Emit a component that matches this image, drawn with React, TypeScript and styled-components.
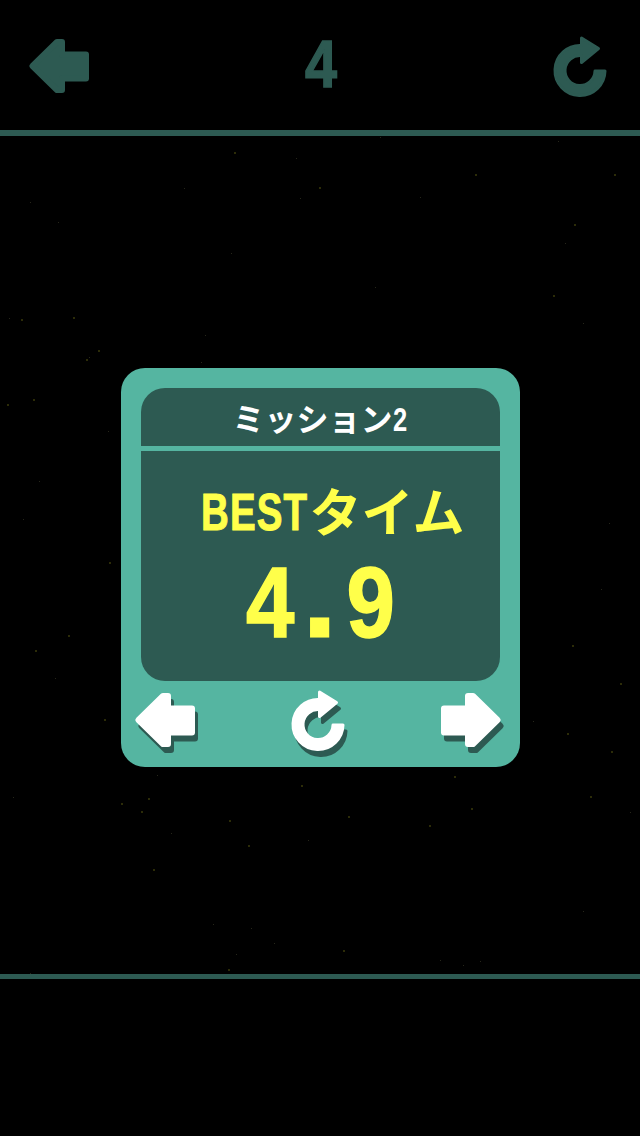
import styled, { createGlobalStyle } from 'styled-components';

const GREEN = '#55b5a1';
const DARK = '#2d5a52';
const YELLOW = '#ffff4a';
const FONT = `"Liberation Sans", "Noto Sans CJK JP", sans-serif`;
const KANA_FONT = `"Noto Sans CJK JP", sans-serif`;

// x, y, size
const STARS: [number, number, number][] = [
	[234, 152, 2], [296, 158, 1], [475, 174, 2], [614, 174, 2], [184, 188, 1], [319, 187, 2], [300, 198, 1],
	[420, 197, 1], [30, 202, 1], [58, 222, 1], [574, 224, 2], [565, 243, 1], [231, 253, 1], [375, 287, 1],
	[553, 295, 2], [583, 323, 1], [9, 318, 1], [21, 319, 2], [73, 317, 2], [205, 335, 1], [98, 350, 2],
	[86, 359, 2], [89, 357, 1], [201, 362, 1], [558, 141, 1], [380, 137, 1],
	[33, 399, 2], [7, 404, 2], [108, 431, 1], [39, 481, 1], [23, 519, 1], [109, 562, 2], [68, 635, 2],
	[35, 650, 2], [609, 523, 1], [601, 589, 1], [572, 645, 2], [55, 678, 1], [104, 719, 2], [620, 683, 2],
	[533, 721, 1], [567, 733, 2], [611, 751, 2],
	[157, 775, 1], [454, 776, 2], [301, 785, 2], [590, 796, 2], [13, 797, 1], [148, 798, 2], [121, 803, 2],
	[141, 811, 2], [471, 808, 2], [348, 816, 2], [229, 820, 2], [429, 825, 2], [630, 812, 1], [171, 833, 1],
	[308, 840, 1], [248, 845, 2], [153, 869, 2], [583, 911, 1], [213, 924, 1], [251, 928, 1], [274, 943, 1],
	[343, 950, 2], [236, 954, 1], [440, 960, 1], [463, 965, 1], [480, 961, 1], [228, 969, 2], [30, 973, 1],
];

const GlobalStyle = createGlobalStyle`
	html, body {
		margin: 0;
		background: #000;
	}
`;

const Screen = styled.div`
	position: relative;
	width: 640px;
	height: 1136px;
	overflow: hidden;
	background: #000;
	display: flex;
	flex-direction: column;
	font-family: ${FONT};
`;

const StarField = styled.svg`
	position: absolute;
	inset: 0;
`;

const Header = styled.header`
	position: relative;
	height: 94px;
	flex: none;
	display: flex;
	align-items: flex-start;
	justify-content: space-between;
	padding: 36px 33px 0 29px;
	border-bottom: 6px solid ${DARK};
`;

const BackIcon = styled.svg`
	margin-top: 3px;
	display: block;
`;

const Count = styled.div`
	width: 32px;
	margin-top: -2px;
	display: flex;
	justify-content: center;
	color: ${DARK};
	font-size: 66px;
	font-weight: 700;
	line-height: 60px;
	-webkit-text-stroke: 1.5px ${DARK};
	transform: scaleX(0.87);
`;

const Main = styled.main`
	position: relative;
	flex: none;
	height: 606px;
	padding-top: 232px;
	display: flex;
	justify-content: center;
	align-items: flex-start;
	border-bottom: 5px solid ${DARK};
`;

const Card = styled.section`
	width: 399px;
	height: 399px;
	box-sizing: border-box;
	background: ${GREEN};
	border-radius: 24px;
	padding-top: 20px;
	display: flex;
	flex-direction: column;
	align-items: center;
`;

const Panel = styled.div`
	width: 359px;
	height: 293px;
	flex: none;
	background: ${DARK};
	border-radius: 24px;
	overflow: hidden;
	display: flex;
	flex-direction: column;
`;

const Title = styled.div`
	height: 58px;
	flex: none;
	display: flex;
	align-items: center;
	justify-content: center;
	color: #fff;
	font-size: 32px;
	font-weight: 700;
	line-height: 1;
	border-bottom: 5px solid ${GREEN};
`;

const TitleKana = styled.span`
	font-family: ${KANA_FONT};
`;

const TitleNumber = styled.span`
	display: inline-block;
	width: 15px;
	font-size: 34px;
	transform: translateY(2px) scaleX(0.75);
	transform-origin: left center;
`;

const Body = styled.div`
	flex: 1;
	display: flex;
	flex-direction: column;
	align-items: flex-start;
`;

const BestRow = styled.div`
	margin: 34px 0 0 60px;
	height: 50px;
	display: flex;
	align-items: center;
	color: ${YELLOW};
	line-height: 1;
	font-weight: 700;
`;

const BestLabel = styled.span`
	display: inline-block;
	width: 109px;
	font-size: 52px;
	letter-spacing: 1.5px;
	white-space: nowrap;
	-webkit-text-stroke: 1px ${YELLOW};
	transform: translateY(2px) scaleX(0.74);
	transform-origin: left center;
`;

const BestKana = styled.span`
	font-family: ${KANA_FONT};
	font-size: 52px;
	font-weight: 700;
`;

const Time = styled.div`
	margin: 15px 0 0 105px;
	color: ${YELLOW};
	font-size: 100px;
	font-weight: 700;
	line-height: 104px;
	letter-spacing: 16px;
	white-space: nowrap;
	-webkit-text-stroke: 1.5px ${YELLOW};
	transform: scaleX(0.87);
	transform-origin: left center;
`;

const TimeDot = styled.span`
	display: inline-block;
	-webkit-text-stroke: 5px ${YELLOW};
	transform: translateY(-2.5px) scaleX(1.15);
`;

const Controls = styled.nav`
	flex: 1;
	align-self: stretch;
	display: flex;
	align-items: flex-start;
	justify-content: space-between;
	padding: 9px 19px 0 14px;
`;

const ControlIcon = styled.svg<{ $drop: number }>`
	display: block;
	margin-top: ${(p) => p.$drop}px;
	filter: drop-shadow(3px 6px 0 ${DARK});
	overflow: visible;
`;

function ArrowShape({ fill }: { fill: string }) {
	return (
		<path
			d="M3.5 27 L28 3 L33 3 L33 15.5 L57 15.5 L57 39.5 L33 39.5 L33 51 L28 51 Z"
			fill={fill}
			stroke={fill}
			strokeWidth={6}
			strokeLinejoin="round"
		/>
	);
}

function RetryShape({ fill }: { fill: string }) {
	return (
		<path
			d="M52 35 A25 25 0 1 1 28.5 9.6 L28.5 2 L45.5 12.5 L28.5 26.5 L28.5 19.6 A15 15 0 1 0 42 35 Z"
			fill={fill}
			stroke={fill}
			strokeWidth={3}
			strokeLinejoin="round"
		/>
	);
}

export default function App() {
	return (
		<>
			<GlobalStyle />
			<Screen>
				<StarField width={640} height={1136}>
					{STARS.map(([x, y, s]) => (
						<rect key={`${x}-${y}`} x={x} y={y} width={s} height={s} fill={s > 1 ? '#2c2c08' : '#26261a'} />
					))}
				</StarField>
				<Header>
					<BackIcon width={60} height={54} viewBox="0 0 60 54">
						<ArrowShape fill={DARK} />
					</BackIcon>
					<Count>4</Count>
					<svg width={54} height={62} viewBox="0 0 54 62">
						<RetryShape fill={DARK} />
					</svg>
				</Header>
				<Main>
					<Card>
						<Panel>
							<Title>
								<TitleKana>ミッション</TitleKana>
								<TitleNumber>2</TitleNumber>
							</Title>
							<Body>
								<BestRow>
									<BestLabel>BEST</BestLabel>
									<BestKana>タイム</BestKana>
								</BestRow>
								<Time>
									4<TimeDot>.</TimeDot>9
								</Time>
							</Body>
						</Panel>
						<Controls>
							<ControlIcon width={60} height={54} viewBox="0 0 60 54" $drop={3}>
								<ArrowShape fill="#fff" />
							</ControlIcon>
							<ControlIcon width={54} height={62} viewBox="0 0 54 62" $drop={0}>
								<RetryShape fill="#fff" />
							</ControlIcon>
							<ControlIcon width={60} height={54} viewBox="0 0 60 54" $drop={3}>
								<g transform="translate(60 0) scale(-1 1)">
									<ArrowShape fill="#fff" />
								</g>
							</ControlIcon>
						</Controls>
					</Card>
				</Main>
			</Screen>
		</>
	);
}
